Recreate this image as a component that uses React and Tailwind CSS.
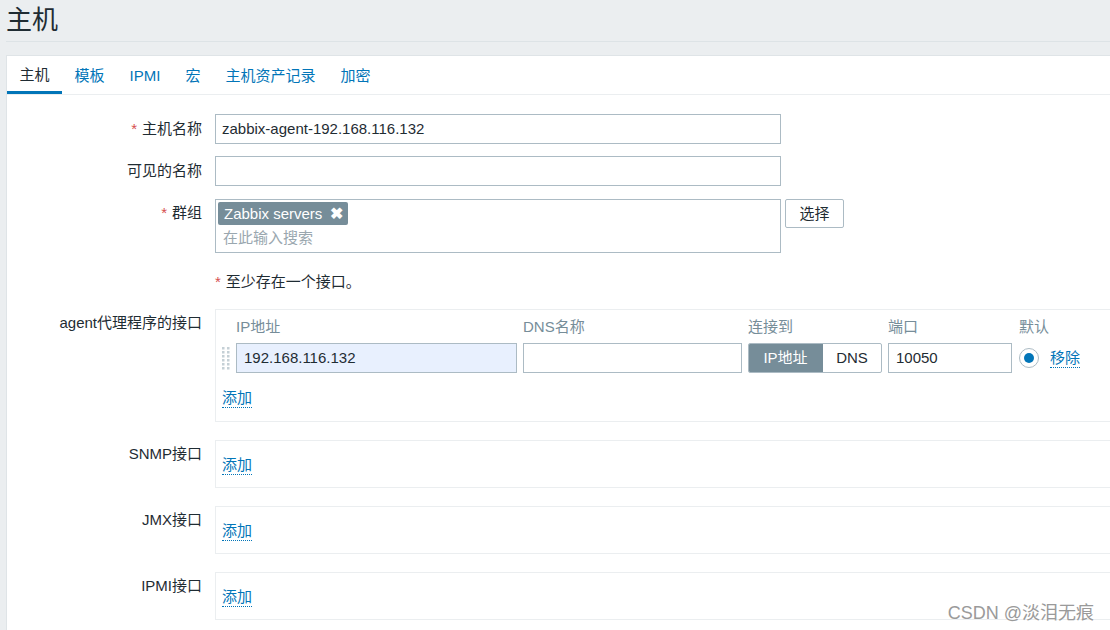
import { Fragment } from 'react';

const FONT = "font-['Liberation_Sans','Noto_Sans_CJK_SC',sans-serif]";

const tabs = ['主机', '模板', 'IPMI', '宏', '主机资产记录', '加密'];

const Req = () => <span className="text-[#d64e4e] mr-[5px]">*</span>;

const AddLink = ({ label = '添加' }) => (
  <span className="inline-block leading-[18px] text-[#0275b8] border-b border-dotted border-[#0275b8] cursor-pointer">
    {label}
  </span>
);

const Row = ({ label, required, labelClass = 'pt-[6px]', className = '', children }) => (
  <div className={`flex ${className}`}>
    <div className={`w-[208px] shrink-0 pr-[13px] text-right leading-[18px] ${labelClass}`}>
      {required && <Req />}
      {label}
    </div>
    <div className="flex items-start">{children}</div>
  </div>
);

const DragHandle = () => (
  <svg width="8" height="23" viewBox="0 0 8 23" className="shrink-0">
    {[0, 1, 2, 3, 4, 5].map((r) => (
      <Fragment key={r}>
        <rect x="0" y={r * 4} width="2.5" height="2.5" fill="#c5d0d6" />
        <rect x="5" y={r * 4} width="2.5" height="2.5" fill="#c5d0d6" />
      </Fragment>
    ))}
  </svg>
);

const EmptyBox = () => (
  <div className="w-[900px] border border-[#ebeef0] pt-[15px] pb-[12px] pl-[6px] flex">
    <AddLink />
  </div>
);

export default function App() {
  return (
    <div className={`relative w-full h-[630px] overflow-hidden bg-[#ebeef0] pl-[6px] text-[15px] leading-[18px] text-[#1f2c33] ${FONT}`}>
      <header className="h-[42px] border-b border-[#dde3e6]">
        <h1 className="text-[26px] leading-[40px] text-[#1f2c33]">主机</h1>
      </header>

      <div className="mt-[13px] bg-white border-t border-l border-[#dfe4e7] h-full">
        <div className="flex h-[39px] border-b border-[#ebeef0]">
          {tabs.map((t, i) => (
            <div
              key={t}
              className={`h-[38px] px-[12.5px] pt-[2px] flex items-center ${
                i === 0
                  ? 'border-b-[3px] border-[#0275b8] text-[#1f2c33]'
                  : 'text-[#0275b8]'
              }`}
            >
              {t}
            </div>
          ))}
        </div>

        <div className="pt-[19px]">
          <Row label="主机名称" required>
            <div className="w-[566px] h-[30px] border border-[#acbbc4] px-[6px] flex items-center">
              zabbix-agent-192.168.116.132
            </div>
          </Row>

          <Row label="可见的名称" className="mt-[12px]">
            <div className="w-[566px] h-[30px] border border-[#acbbc4]" />
          </Row>

          <Row label="群组" required className="mt-[13px]" labelClass="pt-[5px]">
            <div className="w-[566px] h-[54px] border border-[#acbbc4] pl-[2px] pt-[2px]">
              <div className="inline-flex items-center h-[23px] bg-[#768d99] text-white rounded-[2px] pl-[6px] pr-[5px]">
                <span>Zabbix servers</span>
                <span className="ml-[8px] text-[16px] font-bold leading-none">✖</span>
              </div>
              <div className="pl-[5px] mt-[3px] leading-[20px] text-[#9aa7af]">在此输入搜索</div>
            </div>
            <button className="ml-[4px] w-[59px] h-[29px] border border-[#acbbc4] rounded-[2px] bg-white text-[#1f2c33]">
              选择
            </button>
          </Row>

          <Row label="" className="mt-[20px]" labelClass="">
            <div className="leading-[18px]">
              <Req />
              至少存在一个接口。
            </div>
          </Row>

          <Row label="agent代理程序的接口" className="mt-[18px]" labelClass="pt-[5px]">
            <div className="w-[900px] border border-[#ebeef0] pt-[8px] pb-[13px] pl-[6px]">
              <div className="flex leading-[18px] text-[#768d99]">
                <div className="w-[14px]" />
                <div className="w-[287px]">IP地址</div>
                <div className="w-[225px]">DNS名称</div>
                <div className="w-[140px]">连接到</div>
                <div className="w-[131px]">端口</div>
                <div>默认</div>
              </div>
              <div className="flex items-center mt-[7px]">
                <div className="w-[14px]">
                  <DragHandle />
                </div>
                <div className="w-[281px] h-[30px] border border-[#acbbc4] bg-[#e8f0fe] px-[7px] flex items-center mr-[6px]">
                  192.168.116.132
                </div>
                <div className="w-[219px] h-[30px] border border-[#acbbc4] mr-[6px]" />
                <div className="flex w-[134px] h-[30px] mr-[6px] rounded-[2px] overflow-hidden border border-[#acbbc4]">
                  <div className="w-[75px] -my-px -ml-px bg-[#768d99] text-white flex items-center justify-center">
                    IP地址
                  </div>
                  <div className="flex-1 flex items-center justify-center">DNS</div>
                </div>
                <div className="w-[124px] h-[30px] border border-[#acbbc4] px-[7px] flex items-center mr-[7px]">
                  10050
                </div>
                <div className="w-[20px] h-[20px] rounded-full border border-[#acbbc4] flex items-center justify-center mr-[11px]">
                  <div className="w-[10px] h-[10px] rounded-full bg-[#0275b8]" />
                </div>
                <AddLink label="移除" />
              </div>
              <div className="mt-[16px] flex">
                <AddLink />
              </div>
            </div>
          </Row>

          <Row label="SNMP接口" className="mt-[18px]" labelClass="pt-[5px]">
            <EmptyBox />
          </Row>
          <Row label="JMX接口" className="mt-[18px]" labelClass="pt-[5px]">
            <EmptyBox />
          </Row>
          <Row label="IPMI接口" className="mt-[18px]" labelClass="pt-[5px]">
            <EmptyBox />
          </Row>
        </div>
      </div>

      <div className="absolute right-[16px] bottom-[8px] text-[18px] text-[#9a9a9a] [text-shadow:0_0_1px_#fff]">
        CSDN @淡泪无痕
      </div>
    </div>
  );
}
